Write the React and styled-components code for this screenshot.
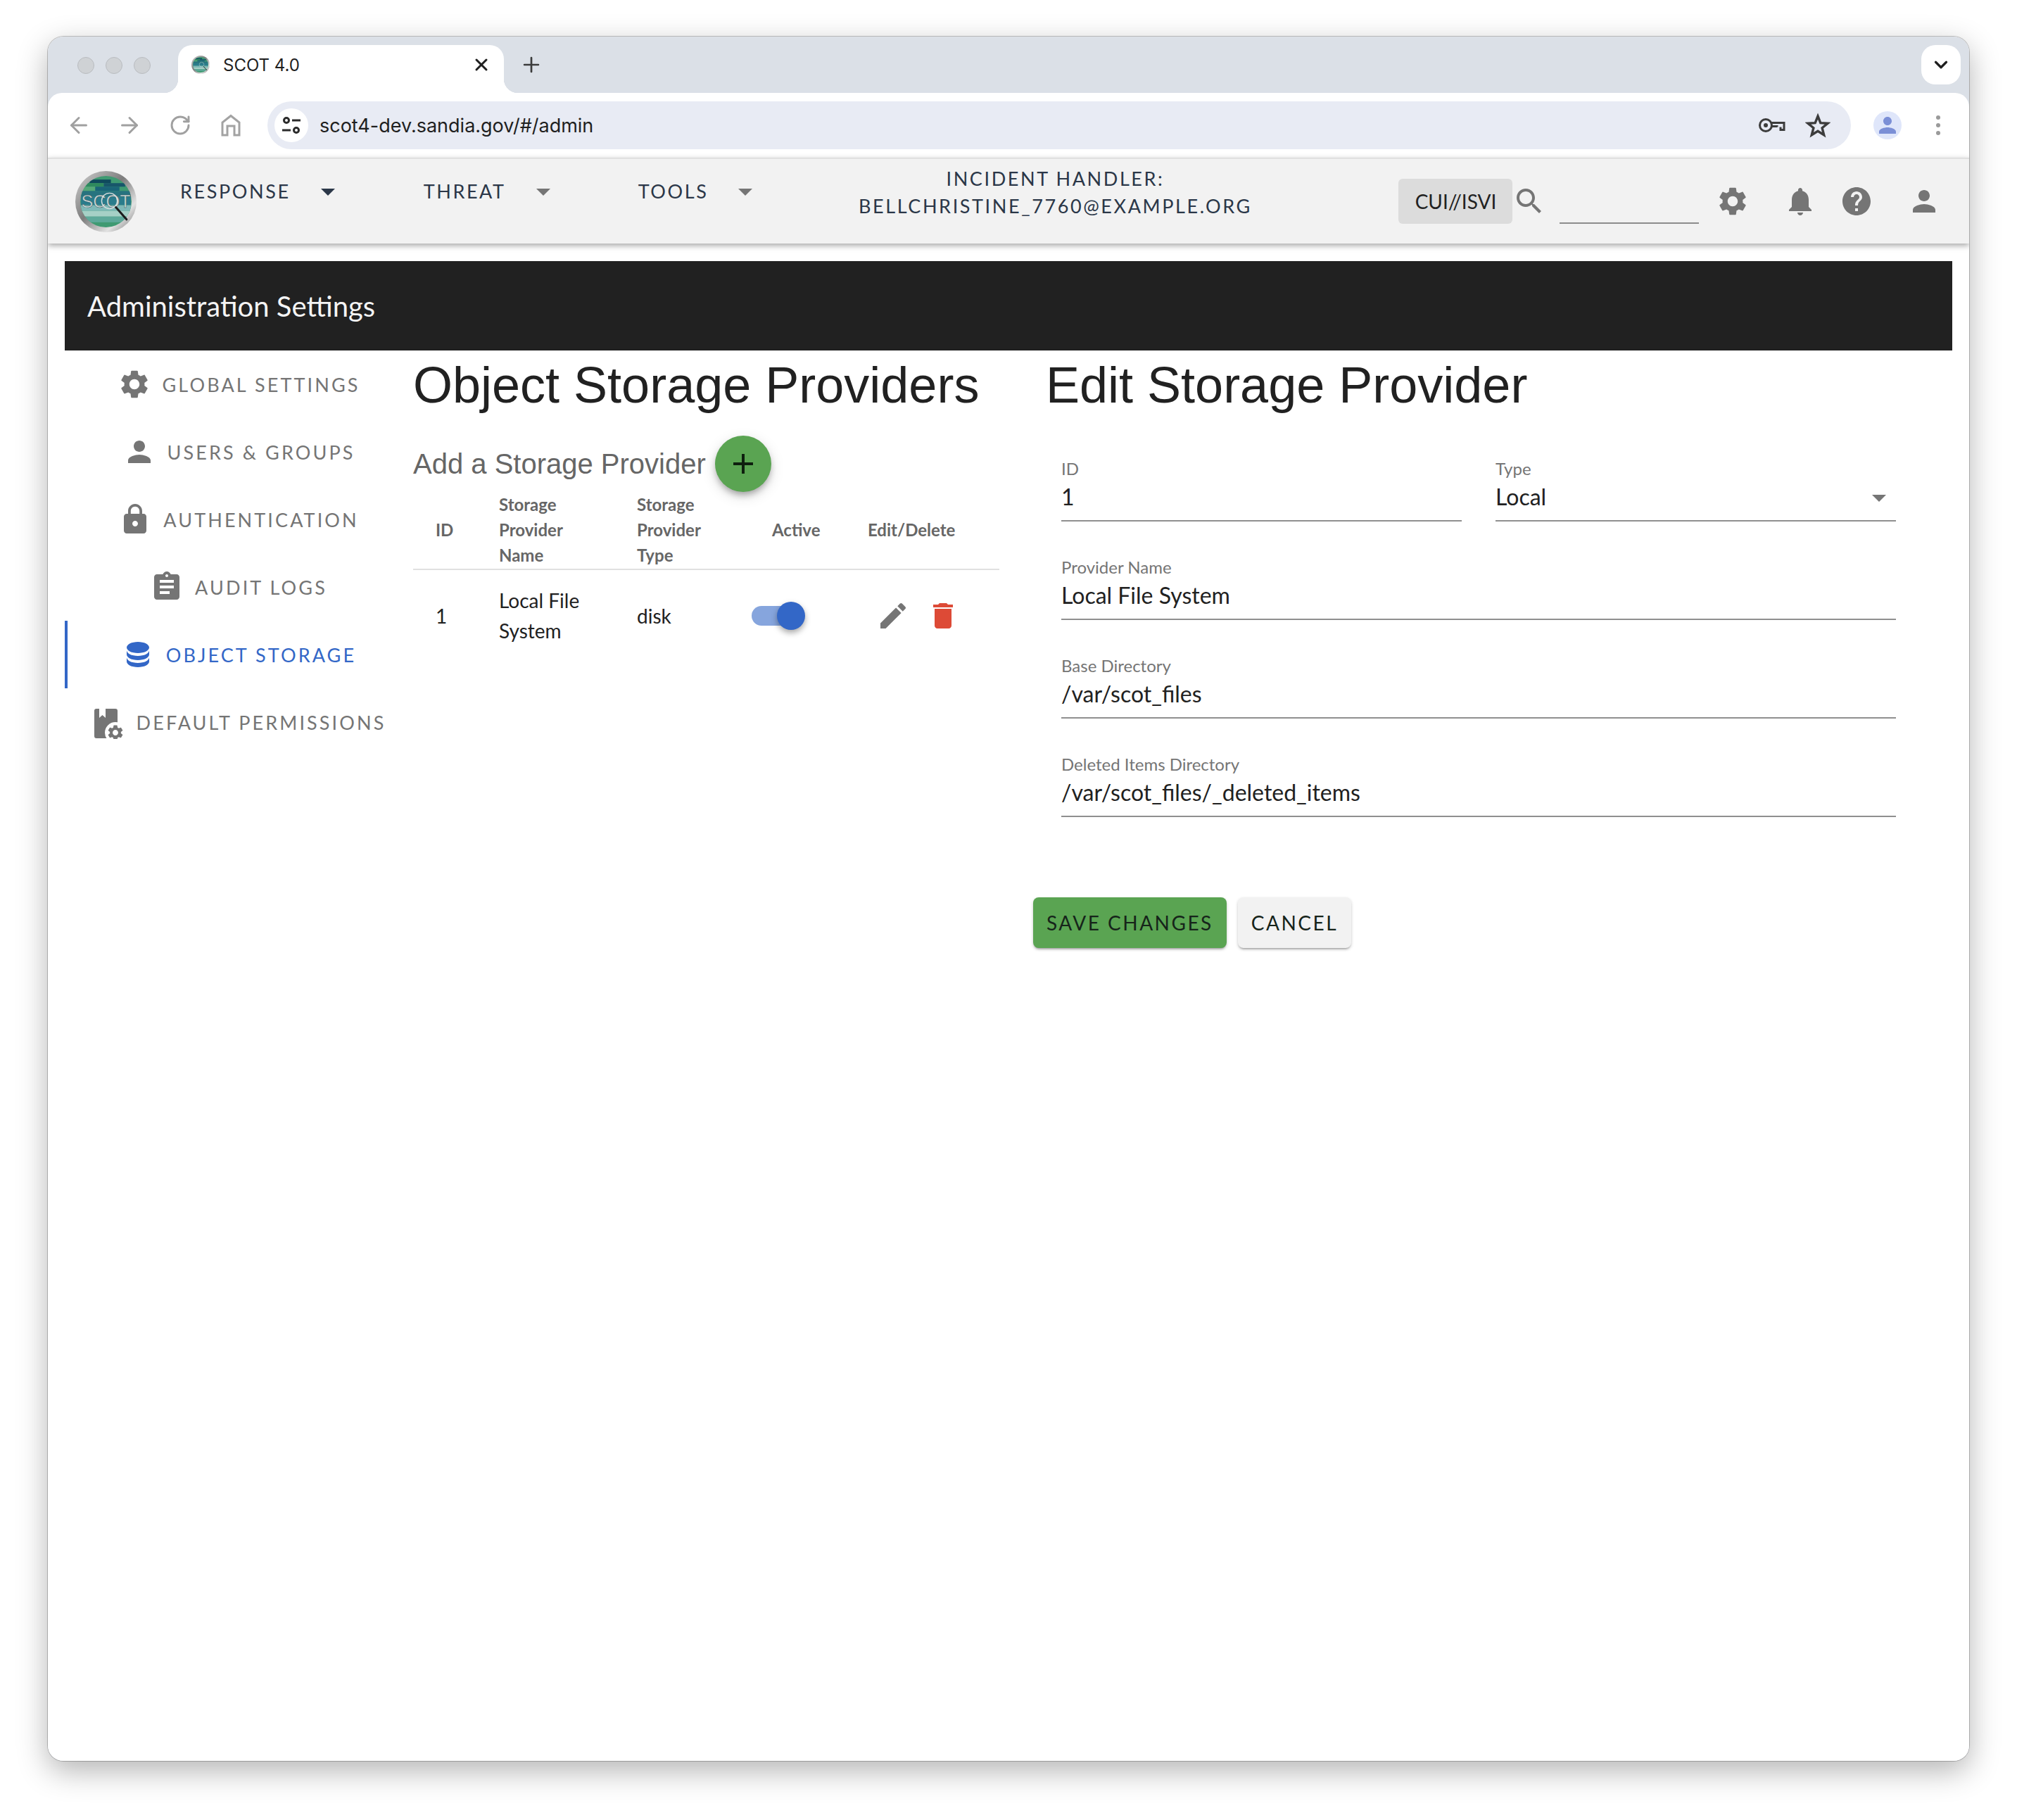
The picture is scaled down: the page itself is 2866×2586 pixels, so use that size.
import React from 'react';
import styled, { createGlobalStyle } from 'styled-components';
import { ArrowLeft, ArrowRight, ChevronDown, Plus, RotateCw, X } from 'lucide-react';

const SANS = '"Lato", "Noto Sans", sans-serif';
const UI = '"Inter", "Roboto", sans-serif';
const HELV = '"Liberation Sans", Arial, sans-serif';

const P = {
   settings: 'M19.14 12.94c.04-.3.06-.61.06-.94 0-.32-.02-.64-.07-.94l2.03-1.58c.18-.14.23-.41.12-.61l-1.92-3.32c-.12-.22-.37-.29-.59-.22l-2.39.96c-.5-.38-1.03-.7-1.62-.94l-.36-2.54c-.04-.24-.24-.41-.48-.41h-3.84c-.24 0-.43.17-.47.41l-.36 2.54c-.59.24-1.13.57-1.62.94l-2.39-.96c-.22-.08-.47 0-.59.22L2.74 8.87c-.12.21-.08.47.12.61l2.03 1.58c-.05.3-.09.63-.09.94s.02.64.07.94l-2.03 1.58c-.18.14-.23.41-.12.61l1.92 3.32c.12.22.37.29.59.22l2.39-.96c.5.38 1.03.7 1.62.94l.36 2.54c.05.24.24.41.48.41h3.84c.24 0 .44-.17.47-.41l.36-2.54c.59-.24 1.13-.56 1.62-.94l2.39.96c.22.08.47 0 .59-.22l1.92-3.32c.12-.22.07-.47-.12-.61l-2.01-1.58zM12 15.6c-1.98 0-3.6-1.62-3.6-3.6s1.62-3.6 3.6-3.6 3.6 1.62 3.6 3.6-1.62 3.6-3.6 3.6z',
   bell: 'M12 22c1.1 0 2-.9 2-2h-4c0 1.1.89 2 2 2zm6-6v-5c0-3.07-1.64-5.64-4.5-6.32V4c0-.83-.67-1.5-1.5-1.5s-1.5.67-1.5 1.5v.68C7.63 5.36 6 7.92 6 11v5l-2 2v1h16v-1l-2-2z',
   help: 'M12 2C6.48 2 2 6.48 2 12s4.48 10 10 10 10-4.48 10-10S17.52 2 12 2zm1 17h-2v-2h2v2zm2.07-7.75l-.9.92C13.45 12.9 13 13.5 13 15h-2v-.5c0-1.1.45-2.1 1.17-2.83l1.24-1.26c.37-.36.59-.86.59-1.41 0-1.1-.9-2-2-2s-2 .9-2 2H8c0-2.21 1.79-4 4-4s4 1.79 4 4c0 .88-.36 1.68-.93 2.25z',
   person: 'M12 12c2.21 0 4-1.79 4-4s-1.79-4-4-4-4 1.79-4 4 1.79 4 4 4zm0 2c-2.67 0-8 1.34-8 4v2h16v-2c0-2.66-5.33-4-8-4z',
   lock: 'M18 8h-1V6c0-2.76-2.24-5-5-5S7 3.24 7 6v2H6c-1.1 0-2 .9-2 2v10c0 1.1.9 2 2 2h12c1.1 0 2-.9 2-2V10c0-1.1-.9-2-2-2zm-6 9c-1.1 0-2-.9-2-2s.9-2 2-2 2 .9 2 2-.9 2-2 2zm3.1-9H8.9V6c0-1.71 1.39-3.1 3.1-3.1 1.71 0 3.1 1.39 3.1 3.1v2z',
   assignment: 'M19 3h-4.18C14.4 1.84 13.3 1 12 1c-1.3 0-2.4.84-2.82 2H5c-1.1 0-2 .9-2 2v14c0 1.1.9 2 2 2h14c1.1 0 2-.9 2-2V5c0-1.1-.9-2-2-2zm-7 0c.55 0 1 .45 1 1s-.45 1-1 1-1-.45-1-1 .45-1 1-1zm2 14H7v-2h7v2zm3-4H7v-2h10v2zm0-4H7V7h10v2z',
   database: 'M12,3C7.58,3 4,4.79 4,7C4,9.21 7.58,11 12,11C16.42,11 20,9.21 20,7C20,4.79 16.42,3 12,3M4,9V12C4,14.21 7.58,16 12,16C16.42,16 20,14.21 20,12V9C20,11.21 16.42,13 12,13C7.58,13 4,11.21 4,9M4,14V17C4,19.21 7.58,21 12,21C16.42,21 20,19.21 20,17V14C20,16.21 16.42,18 12,18C7.58,18 4,16.21 4,14Z',
   edit: 'M3 17.25V21h3.75L17.81 9.94l-3.75-3.75L3 17.25zM20.71 7.04c.39-.39.39-1.02 0-1.41l-2.34-2.34c-.39-.39-1.02-.39-1.41 0l-1.83 1.83 3.75 3.75 1.83-1.83z',
   trash: 'M6 19c0 1.1.9 2 2 2h8c1.1 0 2-.9 2-2V7H6v12zM19 4h-3.5l-1-1h-5l-1 1H5v2h14V4z',
   add: 'M19 13h-6v6h-2v-6H5v-2h6V5h2v6h6v2z',
   search: 'M15.5 14h-.79l-.28-.27C15.41 12.59 16 11.11 16 9.5 16 5.91 13.09 3 9.5 3S3 5.91 3 9.5 5.91 16 9.5 16c1.61 0 3.09-.59 4.23-1.57l.27.28v.79l5 4.99L20.49 19l-4.99-5zm-6 0C7.01 14 5 11.99 5 9.5S7.01 5 9.5 5 14 7.01 14 9.5 11.99 14 9.5 14z',
};

const GlobalStyle = createGlobalStyle`
   html, body {
      margin: 0;
      padding: 0;
      background: #fff;
   }
   * {
      box-sizing: border-box;
   }
`;

const Page = styled.div`
   width: 2866px;
   height: 2586px;
   padding: 52px 68px 84px;
   overflow: hidden;
`;
const Win = styled.div`
   height: 100%;
   display: flex;
   flex-direction: column;
   overflow: hidden;
   background: #dbe0e7;
   border-radius: 22px;
`;
const WinShadow = styled.div`
   height: 100%;
   border-radius: 22px;
   box-shadow: 0 0 0 1px rgba(0, 0, 0, 0.22), 0 14px 44px rgba(0, 0, 0, 0.3);
`;

/* browser chrome */
const TabStrip = styled.div`
   height: 80px;
   flex: none;
   display: flex;
   align-items: flex-end;
   padding-left: 42px;
`;
const Lights = styled.div`
   align-self: flex-start;
   margin-top: 29px;
   display: flex;
   gap: 16px;
`;
const Light = styled.span`
   width: 24px;
   height: 24px;
   border-radius: 50%;
   background: #cfd2d5;
   border: 1px solid #b9bcc0;
`;
const Tab = styled.div`
   position: relative;
   width: 463px;
   height: 68px;
   margin-left: 39px;
   padding: 0 18px 12px 19px;
   display: flex;
   align-items: center;
   gap: 19px;
   background: #fff;
   border-radius: 20px 20px 0 0;
   font: 400 24px ${UI};
   color: #1f1f1f;
   &::before, &::after {
      content: '';
      position: absolute;
      bottom: 0;
      width: 20px;
      height: 20px;
   }
   &::before {
      left: -20px;
      background: radial-gradient(circle at 0 0, transparent 20px, #fff 20.5px);
   }
   &::after {
      right: -20px;
      background: radial-gradient(circle at 100% 0, transparent 20px, #fff 20.5px);
   }
`;
const TabTitle = styled.span`
   flex: 1;
`;
const NewTab = styled.span`
   display: flex;
   align-self: flex-start;
   margin: 23px 0 0 22px;
   color: #3c3c3c;
`;
const Expand = styled.span`
   align-self: flex-start;
   width: 56px;
   height: 56px;
   margin: 12px 12px 0 auto;
   display: flex;
   align-items: center;
   justify-content: center;
   background: #fff;
   border-radius: 20px;
   color: #1f1f1f;
`;
const Toolbar = styled.div`
   height: 92px;
   flex: none;
   display: flex;
   align-items: center;
   gap: 32px;
   padding: 0 24px;
   background: #fff;
   border-radius: 20px 20px 0 0;
`;
const ToolBtn = styled.span`
   width: 40px;
   height: 40px;
   flex: none;
   display: flex;
   align-items: center;
   justify-content: center;
   color: #a0a0a0;
`;
const UrlBar = styled.div`
   flex: 1;
   height: 68px;
   display: flex;
   align-items: center;
   gap: 16px;
   padding: 0 29px 0 10px;
   background: #e8ebf4;
   border-radius: 34px;
`;
const SiteInfo = styled.span`
   width: 48px;
   height: 48px;
   display: flex;
   align-items: center;
   justify-content: center;
   background: #fff;
   border-radius: 50%;
`;
const Url = styled.span`
   flex: 1;
   font: 400 27px ${UI};
   color: #1f1f1f;
`;
const UrlIcons = styled.span`
   display: flex;
   align-items: center;
   gap: 27px;
`;
const Avatar = styled.span`
   width: 40px;
   height: 40px;
   flex: none;
   display: flex;
   align-items: center;
   justify-content: center;
   background: #dfe6fa;
   border-radius: 50%;
`;

/* app header */
const AppBar = styled.header`
   position: relative;
   z-index: 1;
   height: 122px;
   flex: none;
   display: flex;
   align-items: center;
   padding-left: 39px;
   background: #f2f2f2;
   border-top: 2px solid #e0e0e0;
   box-shadow: 0 3px 8px rgba(0, 0, 0, 0.35);
`;
const NavItem = styled.div`
   display: flex;
   align-items: center;
   gap: 43px;
   margin-left: ${(props) => props.$gap}px;
   padding-bottom: 30px;
   font: 400 27px ${SANS};
   letter-spacing: 2.6px;
   color: #2b3748;
`;
const Caret = styled.span`
   width: 0;
   height: 0;
   margin-top: 4px;
   border-left: 10px solid transparent;
   border-right: 10px solid transparent;
   border-top: 10px solid ${(props) => props.$color || '#757575'};
`;
const Handler = styled.div`
   width: 700px;
   margin-left: 80px;
   padding-bottom: 26px;
   text-align: center;
   font: 400 27px/39px ${SANS};
   letter-spacing: 2.6px;
   color: #2b3748;
`;
const Chip = styled.div`
   width: 162px;
   height: 64px;
   margin-left: 138px;
   display: flex;
   align-items: center;
   justify-content: center;
   background: #dcdcdc;
   border-radius: 6px;
   font: 400 28px ${SANS};
   color: #222;
`;
const SearchBox = styled.div`
   width: 198px;
   height: 64px;
   margin: 0 24px 0 19px;
   border-bottom: 2px solid #8c8c8c;
`;
const HeaderIcon = styled.span`
   display: flex;
   margin-left: ${(props) => props.$gap || 0}px;
`;
const Glyph = styled.svg`
   width: ${(props) => props.$size || 48}px;
   height: ${(props) => props.$size || 48}px;
   flex: none;
   fill: ${(props) => props.$color || '#757575'};
`;
const Icon = ({ d, size, color }) => (
   <Glyph $size={size} $color={color} viewBox="0 0 24 24">
      <path d={d} />
   </Glyph>
);

/* content */
const Content = styled.main`
   flex: 1;
   padding: 25px 24px 0;
   background: #fff;
`;
const Banner = styled.div`
   height: 127px;
   display: flex;
   align-items: center;
   padding-left: 32px;
   background: #212121;
   font: 400 40px ${SANS};
   color: #f4f4f4;
`;
const Columns = styled.div`
   display: grid;
   grid-template-columns: 490px 838px 1306px;
   gap: 0 48px;
   grid-template-columns: 495px 833px 1306px;
   column-gap: 0;
`;
const Side = styled.nav`
   display: flex;
   flex-direction: column;
   margin-right: 5px;
`;
const SideItem = styled.div`
   height: 96px;
   display: flex;
   align-items: center;
   justify-content: center;
   gap: 16px;
   border-left: 4px solid ${(props) => (props.$active ? '#3367c7' : 'transparent')};
   color: ${(props) => (props.$active ? '#3367c7' : '#757575')};
   font: 400 27px ${SANS};
   letter-spacing: 3.1px;
`;
const Column = styled.section`
   min-width: 0;
`;
const FormColumn = styled(Column)`
   margin-left: 48px;
`;
const Title = styled.h1`
   margin: 0;
   height: 98px;
   display: flex;
   align-items: center;
   padding-left: ${(props) => props.$inset || 0}px;
   font: 400 72px ${HELV};
   color: #212121;
   white-space: nowrap;
`;
const AddRow = styled.div`
   margin-top: 23px;
   display: flex;
   align-items: center;
   gap: 13px;
   font: 400 40px ${HELV};
   color: #666;
`;
const Fab = styled.button`
   width: 80px;
   height: 80px;
   padding: 0;
   display: flex;
   align-items: center;
   justify-content: center;
   background: #5aa452;
   border: 0;
   border-radius: 50%;
   box-shadow: 0 6px 10px -2px rgba(0, 0, 0, 0.3), 0 6px 20px rgba(0, 0, 0, 0.14);
`;
const GRID = '122px 196px 163px 165px 187px';
const HeadRow = styled.div`
   display: grid;
   grid-template-columns: ${GRID};
   align-items: center;
   padding-bottom: 1px;
   border-bottom: 2px solid #e0e0e0;
   font: 700 24px/36px ${SANS};
   color: #666;
`;
const BodyRow = styled.div`
   height: 130px;
   display: grid;
   grid-template-columns: ${GRID};
   align-items: center;
   font: 400 28px/43px ${SANS};
   color: #212121;
`;
const Cell = styled.div`
   padding-left: ${(props) => props.$pad || 0}px;
`;
const Actions = styled(Cell)`
   display: flex;
   gap: 23px;
   padding-left: 12px;
`;
const Switch = styled.span`
   position: relative;
   display: block;
   width: 68px;
   height: 28px;
   background: #86a5dd;
   border-radius: 14px;
`;
const Thumb = styled.span`
   position: absolute;
   left: 36px;
   top: -6px;
   width: 40px;
   height: 40px;
   background: #3367c7;
   border-radius: 50%;
   box-shadow: 0 4px 8px rgba(0, 0, 0, 0.35);
`;
const Form = styled.div`
   margin-top: 55px;
   padding: 0 32px 0 40px;
   display: flex;
   flex-direction: column;
   gap: 50px;
`;
const Split = styled.div`
   display: grid;
   grid-template-columns: 1fr 1fr;
   gap: 48px;
`;
const Field = styled.div`
   height: 90px;
   position: relative;
   border-bottom: 2px solid #8f8f8f;
`;
const Label = styled.div`
   font: 400 24px/30px ${SANS};
   color: #757575;
`;
const Value = styled.div`
   margin-top: 5px;
   font: 400 32px/40px ${SANS};
   color: #212121;
`;
const SelectArrow = styled(Caret)`
   position: absolute;
   right: 14px;
   top: 48px;
`;
const Buttons = styled.div`
   margin-top: 114px;
   display: flex;
   gap: 16px;
`;
const Btn = styled.button`
   height: 72px;
   padding: 0 ${(props) => props.$pad}px;
   border: 0;
   border-radius: 8px;
   background: ${(props) => props.$bg};
   box-shadow: 0 3px 3px -2px rgba(0, 0, 0, 0.3), 0 2px 4px rgba(0, 0, 0, 0.2);
   font: 400 28px ${SANS};
   letter-spacing: 2.5px;
   color: #16241a;
`;

const BANDS = [
   [20, 12, 30, 5, '#0f4a5c'],
   [14, 17, 26, 5, '#2f8a5e'],
   [40, 17, 30, 5, '#17566a'],
   [10, 22, 18, 6, '#56a878'],
   [28, 22, 34, 6, '#1a6478'],
   [8, 28, 70, 8, '#27737f'],
   [8, 36, 70, 12, '#2a7c8c'],
   [8, 48, 70, 8, '#7fb9b8'],
   [8, 56, 70, 8, '#a6d0c6'],
   [14, 64, 60, 8, '#5ea99a'],
];

// the round SCOT badge, also used for the tab's favicon
const Logo = ({ id, size, label }) => (
   <svg width={size} height={size} viewBox="0 0 86 86">
      <defs>
         <linearGradient id={`${id}-ring`} x1="0" y1="0" x2="1" y2="1">
            <stop offset="0" stopColor="#d4d4d4" />
            <stop offset="0.45" stopColor="#7c7c7c" />
            <stop offset="0.75" stopColor="#e2e2e2" />
            <stop offset="1" stopColor="#6e6e6e" />
         </linearGradient>
         <clipPath id={`${id}-inner`}>
            <circle cx="43" cy="43" r="36" />
         </clipPath>
      </defs>
      <circle cx="43" cy="43" r="43" fill={`url(#${id}-ring)`} />
      <g clipPath={`url(#${id}-inner)`}>
         <rect x="0" y="0" width="86" height="86" fill="#3f9a72" />
         {BANDS.map(([x, y, w, h, c], index) => (
            <rect key={index} x={x} y={y} width={w} height={h} fill={c} />
         ))}
      </g>
      {label && (
         <text x="43" y="51" textAnchor="middle" fontFamily={HELV} fontSize="25" fill="#cfdedd" stroke="#38525a" strokeWidth="0.5">
            SCOT
         </text>
      )}
      <circle cx="48" cy="42" r="11" fill="none" stroke="#d8dede" strokeWidth="1.4" />
      <path d="M57 51 L72 68" stroke="#1c1c1c" strokeWidth="3" strokeLinecap="round" />
   </svg>
);

const PermissionsIcon = () => (
   <svg width="48" height="48" viewBox="0 0 48 48">
      <path fill="#757575" fillRule="evenodd" d="M7 5h27a3 3 0 0 1 3 3v36a3 3 0 0 1-3 3H7a3 3 0 0 1-3-3V8a3 3 0 0 1 3-3zM11 5v13l4.5-4 4.5 4V5z" />
      <circle cx="34" cy="39" r="15" fill="#fff" />
      <g transform="translate(20.8 25.8) scale(1.1)">
         <path fill="#757575" d={P.settings} />
      </g>
   </svg>
);

const KeyIcon = () => (
   <svg width="40" height="24" viewBox="0 0 40 24" fill="none" stroke="#3c3c3c" strokeWidth="3">
      <circle cx="11" cy="12" r="8.5" />
      <circle cx="11" cy="12" r="3" fill="#3c3c3c" stroke="none" />
      <path d="M19 8.5h18v10h-5v-4M27 14.5v-1H19" />
   </svg>
);

const StarIcon = () => (
   <svg width="36" height="36" viewBox="0 0 36 36" fill="none" stroke="#3c3c3c" strokeWidth="3.4" strokeLinejoin="miter">
      <path d="M18 5l3.8 9.6 10.2.7-7.9 6.5 2.6 10L18 26.3l-8.7 5.5 2.6-10L4 15.3l10.2-.7z" />
   </svg>
);

const HomeIcon = () => (
   <svg width="30" height="32" viewBox="0 0 30 32" fill="none" stroke="#a3a3a3" strokeWidth="3">
      <path d="M3 30V12L15 2.5 27 12v18h-7V17H10v13z" />
   </svg>
);

const TuneIcon = () => (
   <svg width="28" height="28" viewBox="0 0 28 28" fill="none" stroke="#2b2b2b" strokeWidth="3">
      <circle cx="7" cy="7" r="3.5" />
      <path d="M15 7h12M1 21h12" />
      <circle cx="21" cy="21" r="3.5" />
   </svg>
);

const NAV = [
   { label: 'RESPONSE', gap: 62, caret: '#2b3748' },
   { label: 'THREAT', gap: 126 },
   { label: 'TOOLS', gap: 125 },
];

const SIDE = [
   { label: 'GLOBAL SETTINGS', icon: <Icon d={P.settings} /> },
   { label: 'USERS & GROUPS', icon: <Icon d={P.person} /> },
   { label: 'AUTHENTICATION', icon: <Icon d={P.lock} /> },
   { label: 'AUDIT LOGS', icon: <Icon d={P.assignment} /> },
   { label: 'OBJECT STORAGE', icon: <Icon d={P.database} color="#3367c7" />, active: true },
   { label: 'DEFAULT PERMISSIONS', icon: <PermissionsIcon /> },
];

const FIELDS = [
   { label: 'Provider Name', value: 'Local File System' },
   { label: 'Base Directory', value: '/var/scot_files' },
   { label: 'Deleted Items Directory', value: '/var/scot_files/_deleted_items' },
];

const App = () => (
   <Page>
      <GlobalStyle />
      <WinShadow>
         <Win>
            <TabStrip>
               <Lights>
                  <Light />
                  <Light />
                  <Light />
               </Lights>
               <Tab>
                  <Logo id="fav" size={26} />
                  <TabTitle>SCOT 4.0</TabTitle>
                  <X size={28} strokeWidth={2.6} color="#1f1f1f" />
               </Tab>
               <NewTab>
                  <Plus size={34} strokeWidth={1.9} />
               </NewTab>
               <Expand>
                  <ChevronDown size={30} strokeWidth={2.6} />
               </Expand>
            </TabStrip>
            <Toolbar>
               <ToolBtn>
                  <ArrowLeft size={36} strokeWidth={2} />
               </ToolBtn>
               <ToolBtn>
                  <ArrowRight size={36} strokeWidth={2} />
               </ToolBtn>
               <ToolBtn>
                  <RotateCw size={32} strokeWidth={2.2} />
               </ToolBtn>
               <ToolBtn>
                  <HomeIcon />
               </ToolBtn>
               <UrlBar>
                  <SiteInfo>
                     <TuneIcon />
                  </SiteInfo>
                  <Url>scot4-dev.sandia.gov/#/admin</Url>
                  <UrlIcons>
                     <KeyIcon />
                     <StarIcon />
                  </UrlIcons>
               </UrlBar>
               <Avatar>
                  <Icon d={P.person} size={36} color="#7b8fd6" />
               </Avatar>
               <ToolBtn>
                  <svg width="8" height="32" viewBox="0 0 8 32" fill="#9a9a9a">
                     <circle cx="4" cy="5" r="3" />
                     <circle cx="4" cy="16" r="3" />
                     <circle cx="4" cy="27" r="3" />
                  </svg>
               </ToolBtn>
            </Toolbar>
            <AppBar>
               <Logo id="scot" size={87} label />
               {NAV.map((item) => (
                  <NavItem key={item.label} $gap={item.gap}>
                     {item.label}
                     <Caret $color={item.caret} />
                  </NavItem>
               ))}
               <Handler>
                  INCIDENT HANDLER:
                  <br />
                  BELLCHRISTINE_7760@EXAMPLE.ORG
               </Handler>
               <Chip>CUI//ISVI</Chip>
               <Icon d={P.search} />
               <SearchBox />
               <Icon d={P.settings} />
               <HeaderIcon $gap={48}>
                  <Icon d={P.bell} />
               </HeaderIcon>
               <HeaderIcon $gap={32}>
                  <Icon d={P.help} />
               </HeaderIcon>
               <HeaderIcon $gap={48}>
                  <Icon d={P.person} />
               </HeaderIcon>
            </AppBar>
            <Content>
               <Banner>Administration Settings</Banner>
               <Columns>
                  <Side>
                     {SIDE.map((item) => (
                        <SideItem key={item.label} $active={item.active}>
                           {item.icon}
                           {item.label}
                        </SideItem>
                     ))}
                  </Side>
                  <Column>
                     <Title>Object Storage Providers</Title>
                     <AddRow>
                        Add a Storage Provider
                        <Fab>
                           <Icon d={P.add} color="#0e1f0e" />
                        </Fab>
                     </AddRow>
                     <HeadRow>
                        <Cell $pad={32}>ID</Cell>
                        <Cell>
                           Storage
                           <br />
                           Provider
                           <br />
                           Name
                        </Cell>
                        <Cell>
                           Storage
                           <br />
                           Provider
                           <br />
                           Type
                        </Cell>
                        <Cell $pad={29}>Active</Cell>
                        <Cell>Edit/Delete</Cell>
                     </HeadRow>
                     <BodyRow>
                        <Cell $pad={32}>1</Cell>
                        <Cell>
                           Local File
                           <br />
                           System
                        </Cell>
                        <Cell>disk</Cell>
                        <Cell>
                           <Switch>
                              <Thumb />
                           </Switch>
                        </Cell>
                        <Actions>
                           <Icon d={P.edit} />
                           <Icon d={P.trash} color="#dd4a36" />
                        </Actions>
                     </BodyRow>
                  </Column>
                  <FormColumn>
                     <Title $inset={18}>Edit Storage Provider</Title>
                     <Form>
                        <Split>
                           <Field>
                              <Label>ID</Label>
                              <Value>1</Value>
                           </Field>
                           <Field>
                              <Label>Type</Label>
                              <Value>Local</Value>
                              <SelectArrow />
                           </Field>
                        </Split>
                        {FIELDS.map((field) => (
                           <Field key={field.label}>
                              <Label>{field.label}</Label>
                              <Value>{field.value}</Value>
                           </Field>
                        ))}
                     </Form>
                     <Buttons>
                        <Btn $bg="#5aa452" $pad={19}>SAVE CHANGES</Btn>
                        <Btn $bg="#f2f2f2" $pad={19}>CANCEL</Btn>
                     </Buttons>
                  </FormColumn>
               </Columns>
            </Content>
         </Win>
      </WinShadow>
   </Page>
);

export default App;
